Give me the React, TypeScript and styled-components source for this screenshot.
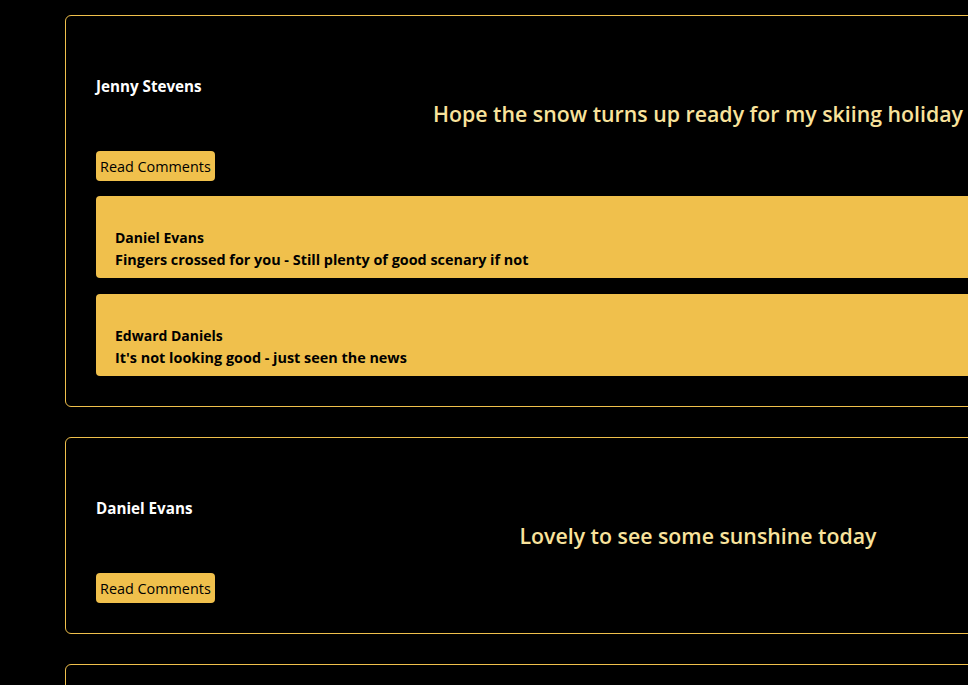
import React from "react";
import styled, { createGlobalStyle } from "styled-components";

const GOLD = "#f0c04c";

const GlobalStyle = createGlobalStyle`
  html, body {
    margin: 0;
    padding: 0;
    background: #000;
    overflow: hidden;
  }
  body {
    font-family: "Open Sans", "Noto Sans", sans-serif;
  }
`;

const Feed = styled.main`
  display: flex;
  flex-direction: column;
  gap: 30px;
  padding: 15px 0 0 65px;
`;

const Card = styled.article`
  box-sizing: border-box;
  width: 1266px;
  flex-shrink: 0;
  border: 1px solid ${GOLD};
  border-radius: 6px;
  padding: 59px 30px 30px;
  display: flex;
  flex-direction: column;
  align-items: flex-start;
`;

const Author = styled.h3`
  margin: 0;
  color: #fff;
  font-size: 15.2px;
  font-weight: 700;
  line-height: 22px;
`;

const Message = styled.p`
  align-self: stretch;
  margin: 3px 0 0;
  text-align: center;
  color: #f9e39c;
  font-size: 21.3px;
  font-weight: 600;
  line-height: 28px;
`;

const ReadButton = styled.button`
  margin-top: 23px;
  border: none;
  border-radius: 4px;
  background: ${GOLD};
  color: #000;
  font-family: inherit;
  font-size: 14.4px;
  font-weight: 400;
  line-height: 20px;
  padding: 6px 4px 4px;
  cursor: pointer;
`;

const CommentList = styled.div`
  align-self: stretch;
  margin-top: 15px;
  display: flex;
  flex-direction: column;
  gap: 16px;
`;

const Comment = styled.div`
  background: ${GOLD};
  border-radius: 4px;
  padding: 31px 19px 7px;
  color: #000;
  font-size: 14.4px;
  font-weight: 700;
  line-height: 22px;
`;

const CommentAuthor = styled.div`
  font-size: 14px;
`;

const CommentText = styled.div``;

type Post = {
  author: string;
  message: string;
  comments?: { author: string; text: string }[];
};

const posts: Post[] = [
  {
    author: "Jenny Stevens",
    message: "Hope the snow turns up ready for my skiing holiday",
    comments: [
      { author: "Daniel Evans", text: "Fingers crossed for you - Still plenty of good scenary if not" },
      { author: "Edward Daniels", text: "It's not looking good - just seen the news" },
    ],
  },
  {
    author: "Daniel Evans",
    message: "Lovely to see some sunshine today",
  },
  {
    author: "Edward Daniels",
    message: "Anyone up for a walk this weekend?",
  },
];

export default function App() {
  return (
    <>
      <GlobalStyle />
      <Feed>
        {posts.map((p) => (
          <Card key={p.author + p.message}>
            <Author>{p.author}</Author>
            <Message>{p.message}</Message>
            <ReadButton>Read Comments</ReadButton>
            {p.comments && (
              <CommentList>
                {p.comments.map((c) => (
                  <Comment key={c.author}>
                    <CommentAuthor>{c.author}</CommentAuthor>
                    <CommentText>{c.text}</CommentText>
                  </Comment>
                ))}
              </CommentList>
            )}
          </Card>
        ))}
      </Feed>
    </>
  );
}
